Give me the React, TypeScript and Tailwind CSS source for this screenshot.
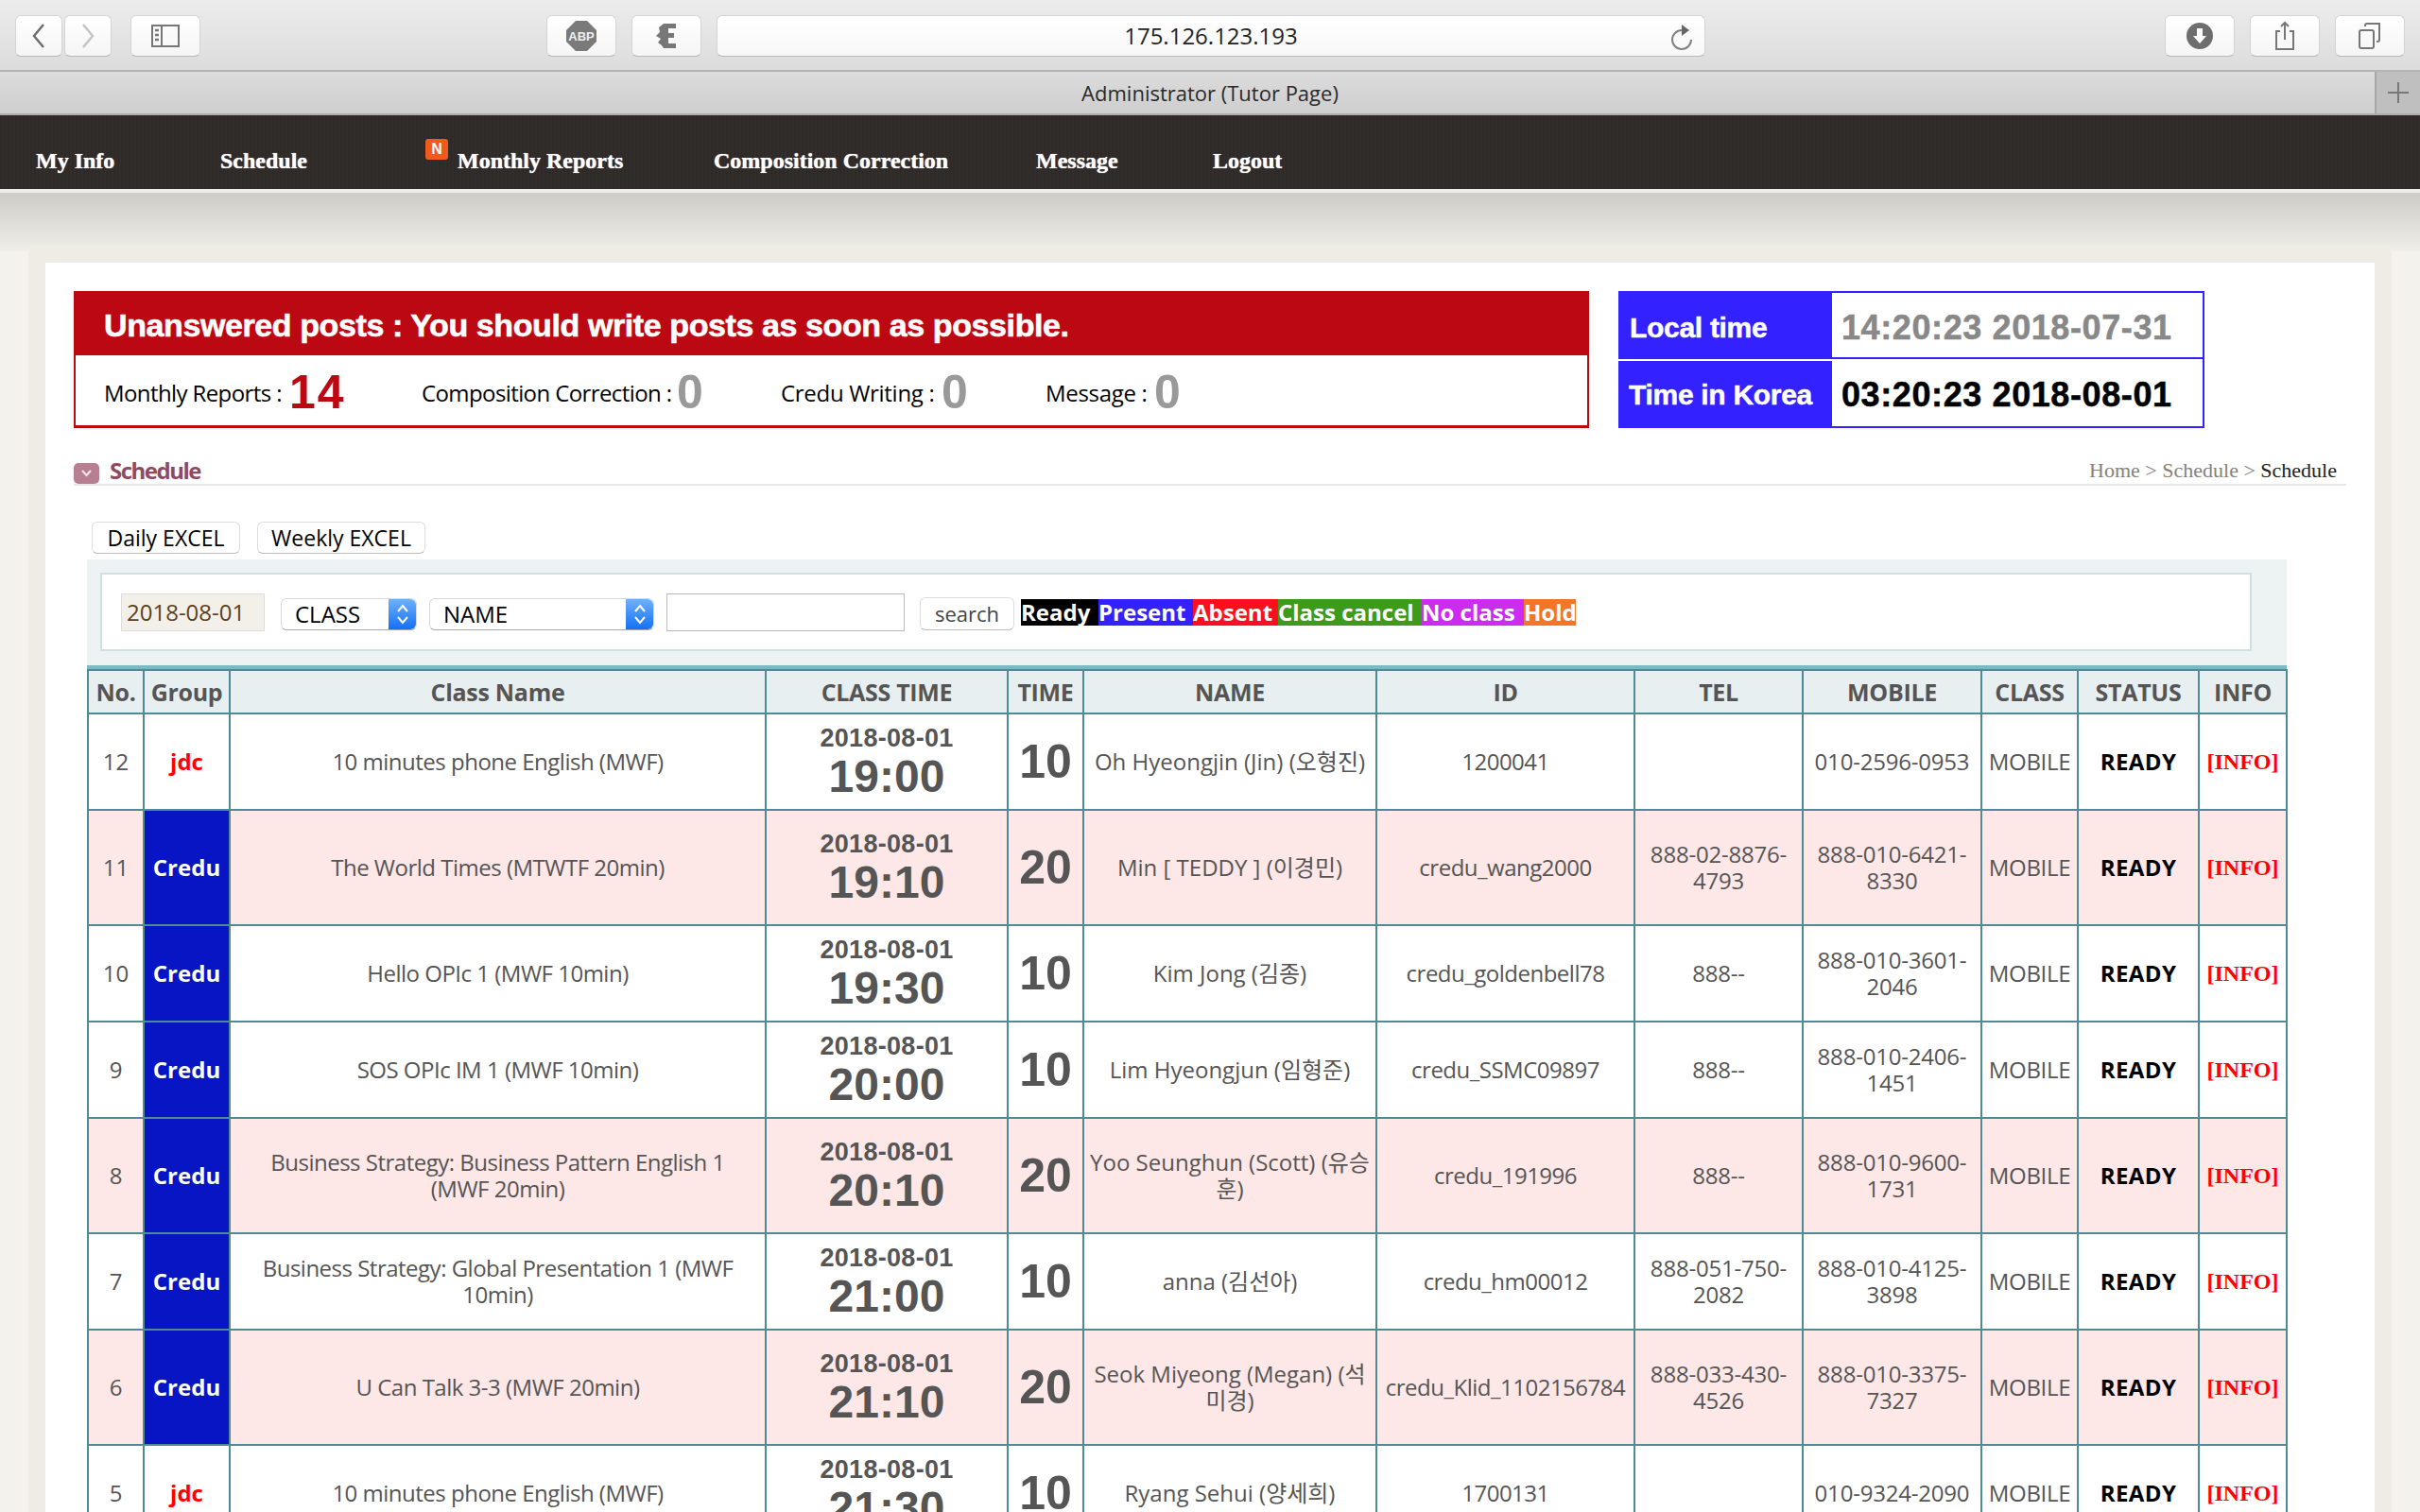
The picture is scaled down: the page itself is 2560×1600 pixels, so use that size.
import React from "react";

const sans = "[font-family:'Open_Sans','Noto_Sans_CJK_KR',sans-serif]";

type Row = {
  no: number; group: "jdc" | "Credu"; cls: React.ReactNode; date: string; time: string; dur: number;
  name: React.ReactNode; id: string; tel: React.ReactNode; mobile: React.ReactNode; tall: boolean; pink: boolean;
};

const rows: Row[] = [
  { no: 12, group: "jdc", cls: "10 minutes phone English (MWF)", date: "2018-08-01", time: "19:00", dur: 10, name: "Oh Hyeongjin (Jin) (오형진)", id: "1200041", tel: "", mobile: "010-2596-0953", tall: false, pink: false },
  { no: 11, group: "Credu", cls: "The World Times (MTWTF 20min)", date: "2018-08-01", time: "19:10", dur: 20, name: "Min [ TEDDY ] (이경민)", id: "credu_wang2000", tel: "888-02-8876-4793", mobile: "888-010-6421-8330", tall: true, pink: true },
  { no: 10, group: "Credu", cls: "Hello OPIc 1 (MWF 10min)", date: "2018-08-01", time: "19:30", dur: 10, name: "Kim Jong (김종)", id: "credu_goldenbell78", tel: "888--", mobile: "888-010-3601-2046", tall: false, pink: false },
  { no: 9, group: "Credu", cls: "SOS OPIc IM 1 (MWF 10min)", date: "2018-08-01", time: "20:00", dur: 10, name: "Lim Hyeongjun (임형준)", id: "credu_SSMC09897", tel: "888--", mobile: "888-010-2406-1451", tall: false, pink: false },
  { no: 8, group: "Credu", cls: "Business Strategy: Business Pattern English 1 (MWF 20min)", date: "2018-08-01", time: "20:10", dur: 20, name: "Yoo Seunghun (Scott) (유승훈)", id: "credu_191996", tel: "888--", mobile: "888-010-9600-1731", tall: true, pink: true },
  { no: 7, group: "Credu", cls: "Business Strategy: Global Presentation 1 (MWF 10min)", date: "2018-08-01", time: "21:00", dur: 10, name: "anna (김선아)", id: "credu_hm00012", tel: "888-051-750-2082", mobile: "888-010-4125-3898", tall: false, pink: false },
  { no: 6, group: "Credu", cls: "U Can Talk 3-3 (MWF 20min)", date: "2018-08-01", time: "21:10", dur: 20, name: "Seok Miyeong (Megan) (석미경)", id: "credu_Klid_1102156784", tel: "888-033-430-4526", mobile: "888-010-3375-7327", tall: true, pink: true },
  { no: 5, group: "jdc", cls: "10 minutes phone English (MWF)", date: "2018-08-01", time: "21:30", dur: 10, name: "Ryang Sehui (양세희)", id: "1700131", tel: "", mobile: "010-9324-2090", tall: false, pink: false },
];

const heads: [string, string][] = [
  ["No.", "w-[59px]"], ["Group", "w-[91px]"], ["Class Name", "w-[567px]"], ["CLASS TIME", "w-[256px]"], ["TIME", "w-[80px]"],
  ["NAME", "w-[310px]"], ["ID", "w-[273px]"], ["TEL", "w-[178px]"], ["MOBILE", "w-[189px]"], ["CLASS", "w-[102px]"],
  ["STATUS", "w-[128px]"], ["INFO", "w-[93px]"],
];

function ToolBtn({ w, children }: { w: string; children?: React.ReactNode }) {
  return (
    <div className={`${w} h-[44px] flex items-center justify-center rounded-[6px] bg-[linear-gradient(#ffffff,#f5f5f5)] border border-[#d4d4d4] border-b-[#b8b8b8]`}>
      {children}
    </div>
  );
}

function Spin() {
  return (
    <div className="w-[29px] h-full rounded-r-[6px] bg-[linear-gradient(#6fb0fb,#1470f5)] flex items-center justify-center">
      <svg width="14" height="24" viewBox="0 0 14 24" fill="none" stroke="#fff" strokeWidth="2"><path d="M2 9l5-6 5 6M2 15l5 6 5-6" /></svg>
    </div>
  );
}

function Sel({ w, label }: { w: string; label: string }) {
  return (
    <div className={`${w} h-[34px] flex items-center justify-between rounded-[6px] bg-white border border-[#d8d8d8] border-b-[#aaa] text-[24px] text-black pl-[14px]`}>
      <span>{label}</span>
      <Spin />
    </div>
  );
}

export default function App() {
  return (
    <div className={`h-[1600px] w-[2560px] overflow-hidden bg-[#f3f2ed] ${sans}`}>
      {/* browser chrome */}
      <div className="h-[76px] bg-[linear-gradient(#ececec,#dcdcdc)] border-b-2 border-[#b4b4b4] flex items-start pt-[16px] pl-[16px] pr-[16px]">
        <ToolBtn w="w-[50px]">
          <svg width="18" height="30" viewBox="0 0 18 30" fill="none" stroke="#6f6f6f" strokeWidth="2.5"><path d="M14 3L4 15l10 12" /></svg>
        </ToolBtn>
        <div className="ml-[2px]">
          <ToolBtn w="w-[50px]">
            <svg width="18" height="30" viewBox="0 0 18 30" fill="none" stroke="#c4c4c4" strokeWidth="2.5"><path d="M4 3l10 12L4 27" /></svg>
          </ToolBtn>
        </div>
        <div className="ml-[20px]">
          <ToolBtn w="w-[74px]">
            <svg width="30" height="26" viewBox="0 0 30 26" fill="none" stroke="#777" strokeWidth="2"><rect x="1" y="2" width="28" height="22" /><path d="M11 2v22" /><path d="M4 7h4M4 12h4M4 17h4" strokeWidth="2.5" /></svg>
          </ToolBtn>
        </div>
        <div className="ml-[366px]">
          <ToolBtn w="w-[74px]">
            <svg width="32" height="32" viewBox="0 0 32 32"><path d="M10 0h12l10 10v12L22 32H10L0 22V10z" fill="#7a7a7a" /><text x="16" y="21" fontSize="13" fontWeight="700" textAnchor="middle" fill="#f0f0f0" fontFamily="Liberation Sans">ABP</text></svg>
          </ToolBtn>
        </div>
        <div className="ml-[16px]">
          <ToolBtn w="w-[74px]">
            <svg width="24" height="28" viewBox="0 0 24 28"><path d="M9 1h13v5h-8v5h6v5h-6v6h8v5H9L7 24 3 21l3-4-5-3 4-4-1-5z" fill="#777" /></svg>
          </ToolBtn>
        </div>
        <div className="ml-[16px] w-[1046px] h-[44px] rounded-[6px] bg-[linear-gradient(#ffffff,#f7f7f7)] border border-[#d4d4d4] border-b-[#b8b8b8] flex items-center relative">
          <span className="w-full text-center text-[24px] text-[#222]">175.126.123.193</span>
          <svg className="absolute right-[11px] top-[7px]" width="26" height="30" viewBox="0 0 26 30" fill="none" stroke="#808080" strokeWidth="2"><path d="M13 8a10 10 0 1 0 10 10" /><path d="M13 2l8 6-8 6z" fill="#666" stroke="none" /></svg>
        </div>
        <div className="ml-auto flex gap-[16px]">
          <ToolBtn w="w-[74px]">
            <svg width="28" height="28" viewBox="0 0 28 28"><circle cx="14" cy="14" r="14" fill="#6e6e6e" /><path d="M11 6h6v8h4l-7 8-7-8h4z" fill="#fff" /></svg>
          </ToolBtn>
          <ToolBtn w="w-[74px]">
            <svg width="24" height="32" viewBox="0 0 24 32" fill="none" stroke="#777" strokeWidth="2"><path d="M7 11H3v19h18V11h-4" /><path d="M12 20V2M8 6l4-4 4 4" /></svg>
          </ToolBtn>
          <ToolBtn w="w-[74px]">
            <svg width="26" height="28" viewBox="0 0 26 28" fill="none" stroke="#777" strokeWidth="2"><rect x="2" y="8" width="15" height="19" rx="2" /><path d="M8 4V3a2 2 0 0 1 2-2h13v17a2 2 0 0 1-2 2h-1" /></svg>
          </ToolBtn>
        </div>
      </div>
      <div className="h-[46px] bg-[linear-gradient(#dcdcdc,#cecece)] border-b-2 border-[#adadad] flex">
        <div className="flex-1 pl-[48px] text-center text-[22px] text-[#2a2a2a] leading-[44px]">Administrator (Tutor Page)</div>
        <div className="w-[48px] h-[44px] bg-[#bfbfbf] border-l-2 border-[#a8a8a8] flex items-center justify-center">
          <svg width="24" height="24" viewBox="0 0 24 24" stroke="#777" strokeWidth="2"><path d="M12 1v22M1 12h22" /></svg>
        </div>
      </div>

      {/* site nav */}
      <div className="h-[82px] bg-[repeating-linear-gradient(90deg,#2e2a27_0_2px,#322d2a_2px_4px)] border-b-[4px] border-[#efede7] flex items-center pt-[18px] pl-[38px] text-[24px] font-bold text-white [font-family:'Liberation_Serif',serif] [text-shadow:0_0_1px_#fff]">
        <div className="w-[195px]">My Info</div>
        <div className="w-[251px]">Schedule</div>
        <div className="w-[271px] relative">
          Monthly Reports
          <span className="absolute left-[-34px] top-[-5px] w-[24px] h-[22px] rounded-[3px] bg-[#f05a1e] text-[16px] leading-[22px] text-center font-bold text-white [font-family:'Liberation_Sans',sans-serif] [text-shadow:none]">N</span>
        </div>
        <div className="w-[341px]">Composition Correction</div>
        <div className="w-[187px]">Message</div>
        <div>Logout</div>
      </div>

      {/* page backdrop */}
      <div className="h-[1396px] pt-[56px] pl-[30px] bg-[linear-gradient(to_bottom,#cdccc7_0px,#efeee9_62px,#f3f2ed_62px)]">
        <div className="w-[2500px] h-[1400px] bg-[#eeece5] p-[18px]">
          {/* white panel */}
          <div className="w-[2464px] h-[1400px] bg-white pl-[30px] pt-[30px]">
            {/* alert + clocks */}
            <div className="flex items-start">
              <div className="w-[1603px] h-[145px] border-x-2 border-b-[3px] border-[#bb0812]">
                <div className="h-[68px] -mx-[2px] bg-[#bb0812] text-white font-bold text-[34px] leading-[72px] pl-[32px] tracking-[-0.4px] [-webkit-text-stroke:0.6px_#fff] [font-family:'Liberation_Sans',sans-serif]">
                  Unanswered posts : You should write posts as soon as possible.
                </div>
                <div className="h-[75px] flex items-center pt-[4px] pl-[30px] text-[24px] text-black tracking-[-0.3px] whitespace-nowrap">
                  <span className="w-[196px] tracking-[-0.6px]">Monthly Reports :</span>
                  <span className="w-[140px] text-[50px] tracking-[2px] font-bold text-[#bb0812] [font-family:'Liberation_Sans',sans-serif]">14</span>
                  <span className="w-[270px] tracking-[-0.6px]">Composition Correction :</span>
                  <span className="w-[110px] text-[50px] font-bold text-[#999] [font-family:'Liberation_Sans',sans-serif]">0</span>
                  <span className="w-[170px]">Credu Writing :</span>
                  <span className="w-[110px] text-[50px] font-bold text-[#999] [font-family:'Liberation_Sans',sans-serif]">0</span>
                  <span className="w-[115px]">Message :</span>
                  <span className="text-[50px] font-bold text-[#999] [font-family:'Liberation_Sans',sans-serif]">0</span>
                </div>
              </div>
              <div className="ml-[31px] w-[620px] h-[145px] [font-family:'Liberation_Sans',sans-serif] font-bold">
                <div className="flex h-[72px] border-t-2 border-[#3322ff]">
                  <div className="w-[226px] bg-[#3322ff] text-white text-[30px] tracking-[-0.3px] leading-[74px] pl-[12px] [-webkit-text-stroke:0.5px_#fff]">Local time</div>
                  <div className="flex-1 border-r-2 border-b-2 border-[#3322ff] text-[#888] text-[36px] leading-[74px] pl-[10px] tracking-[0.6px] [-webkit-text-stroke:0.5px_#888]">14:20:23 2018-07-31</div>
                </div>
                <div className="flex h-[73px]">
                  <div className="w-[226px] mt-[2px] bg-[#3322ff] text-white text-[30px] tracking-[-0.3px] leading-[72px] pl-[11px] [-webkit-text-stroke:0.5px_#fff]">Time in Korea</div>
                  <div className="flex-1 border-r-2 border-b-2 border-[#3322ff] text-black text-[36px] leading-[76px] pl-[10px] tracking-[0.6px] [-webkit-text-stroke:0.5px_#000]">03:20:23 2018-08-01</div>
                </div>
              </div>
            </div>

            {/* section heading */}
            <div className="mt-[37px] w-[2404px] h-[24px] border-b-2 border-[#e6e6e6] flex items-start justify-between pr-[10px]">
              <div className="flex items-center">
                <svg width="27" height="22" viewBox="0 0 27 22"><rect width="27" height="22" rx="5" fill="#b87f93" /><path d="M9 8l4.500 5 4.500-5" stroke="#f3e6ea" strokeWidth="2" fill="none" /></svg>
                <span className="ml-[11px] mt-[-6px] text-[24px] leading-[22px] font-bold text-[#8f4a62] tracking-[-1.5px]">Schedule</span>
              </div>
              <div className="mt-[-3px] text-[22px] leading-[22px] text-[#86817a] [font-family:'Liberation_Serif',serif]">
                Home &gt; Schedule &gt; <span className="text-[#222]">Schedule</span>
              </div>
            </div>

            {/* excel buttons */}
            <div className="mt-[38px] ml-[19px] flex gap-[18px] text-[23px] text-black">
              <div className="w-[157px] h-[34px] rounded-[6px] border border-[#ddd] border-b-[#bbb] text-center leading-[32px]">Daily EXCEL</div>
              <div className="w-[178px] h-[34px] rounded-[6px] border border-[#ddd] border-b-[#bbb] text-center leading-[32px]">Weekly EXCEL</div>
            </div>

            {/* search strip */}
            <div className="mt-[6px] ml-[14px] w-[2327px] h-[112px] bg-[#edf3f3] pl-[14px] pt-[14px]">
              <div className="w-[2276px] h-[83px] bg-white border-2 border-[#cfe0e3] flex items-start pl-[20px] pt-[20px]">
                <div className="w-[152px] h-[40px] bg-[#f3f0e9] border border-[#ddd] text-[24px] leading-[38px] text-[#5c4020] pl-[5px]">2018-08-01</div>
                <div className="ml-[17px] mt-[5px]"><Sel w="w-[144px]" label="CLASS" /></div>
                <div className="ml-[13px] mt-[5px]"><Sel w="w-[238px]" label="NAME" /></div>
                <div className="ml-[13px] w-[252px] h-[40px] bg-white border border-[#bbb]" />
                <div className="ml-[16px] mt-[4px] w-[100px] h-[35px] rounded-[6px] border border-[#ddd] border-b-[#bbb] text-[22px] text-center leading-[32px] text-[#444]">search</div>
                <div className="ml-[7px] mt-[6px] flex h-[28px] text-white font-bold text-[24px] leading-[27px] whitespace-nowrap">
                  <span className="w-[82px] bg-black">Ready</span>
                  <span className="w-[100px] bg-[#3322ff]">Present</span>
                  <span className="w-[90px] bg-[#ff0f1e]">Absent</span>
                  <span className="w-[152px] bg-[#3d9a1a]">Class cancel</span>
                  <span className="w-[108px] bg-[#cc2bf0]">No class</span>
                  <span className="w-[55px] bg-[#f37528]">Hold</span>
                </div>
              </div>
            </div>

            {/* schedule table */}
            <div className="ml-[14px] w-[2327px] h-[4px] bg-[#7fb8c4]" />
            <table className="ml-[14px] w-[2327px] table-fixed border-collapse text-[#555] text-center text-[24px] leading-[28px]">
              <thead>
                <tr className="h-[46px] bg-[#e8eff1]">
                  {heads.map(([h, w]) => (
                    <th key={h} className={`${w} border-2 border-[#4f8b94] px-0 font-bold text-[25px] tracking-[-0.3px]`}>{h}</th>
                  ))}
                </tr>
              </thead>
              <tbody>
                {rows.map((r) => (
                  <tr key={r.no} className={`${r.tall ? "h-[122px]" : "h-[102px]"} ${r.pink ? "bg-[#fde7e7]" : "bg-white"}`}>
                    <td className="border-2 border-[#4f8b94]">{r.no}</td>
                    {r.group === "jdc" ? (
                      <td className="border-2 border-[#4f8b94] font-bold text-[#ff0000]">jdc</td>
                    ) : (
                      <td className="border-2 border-[#4f8b94] font-bold text-white bg-[#0715c4]">Credu</td>
                    )}
                    <td className="border-2 border-[#4f8b94] px-[20px] tracking-[-0.5px]">{r.cls}</td>
                    <td className="border-2 border-[#4f8b94] font-bold [font-family:'Liberation_Sans',sans-serif]">
                      <div className="text-[27px] leading-[32px] tracking-[0.3px]">{r.date}</div>
                      <div className="text-[48px] leading-[50px]">{r.time}</div>
                    </td>
                    <td className="border-2 border-[#4f8b94] font-bold text-[50px] [font-family:'Liberation_Sans',sans-serif]">{r.dur}</td>
                    <td className="border-2 border-[#4f8b94] px-[6px]">{r.name}</td>
                    <td className="border-2 border-[#4f8b94] tracking-[-0.5px]">{r.id}</td>
                    <td className="border-2 border-[#4f8b94] px-[12px] tracking-[-0.2px]">{r.tel}</td>
                    <td className="border-2 border-[#4f8b94] px-[8px] tracking-[-0.2px]">{r.mobile}</td>
                    <td className="border-2 border-[#4f8b94] tracking-[-0.3px]">MOBILE</td>
                    <td className="border-2 border-[#4f8b94] font-bold text-black tracking-[0.4px]">READY</td>
                    <td className="border-2 border-[#4f8b94] font-bold text-[#ff0000] [font-family:'Liberation_Serif',serif]">[INFO]</td>
                  </tr>
                ))}
              </tbody>
            </table>
          </div>
        </div>
      </div>
    </div>
  );
}
